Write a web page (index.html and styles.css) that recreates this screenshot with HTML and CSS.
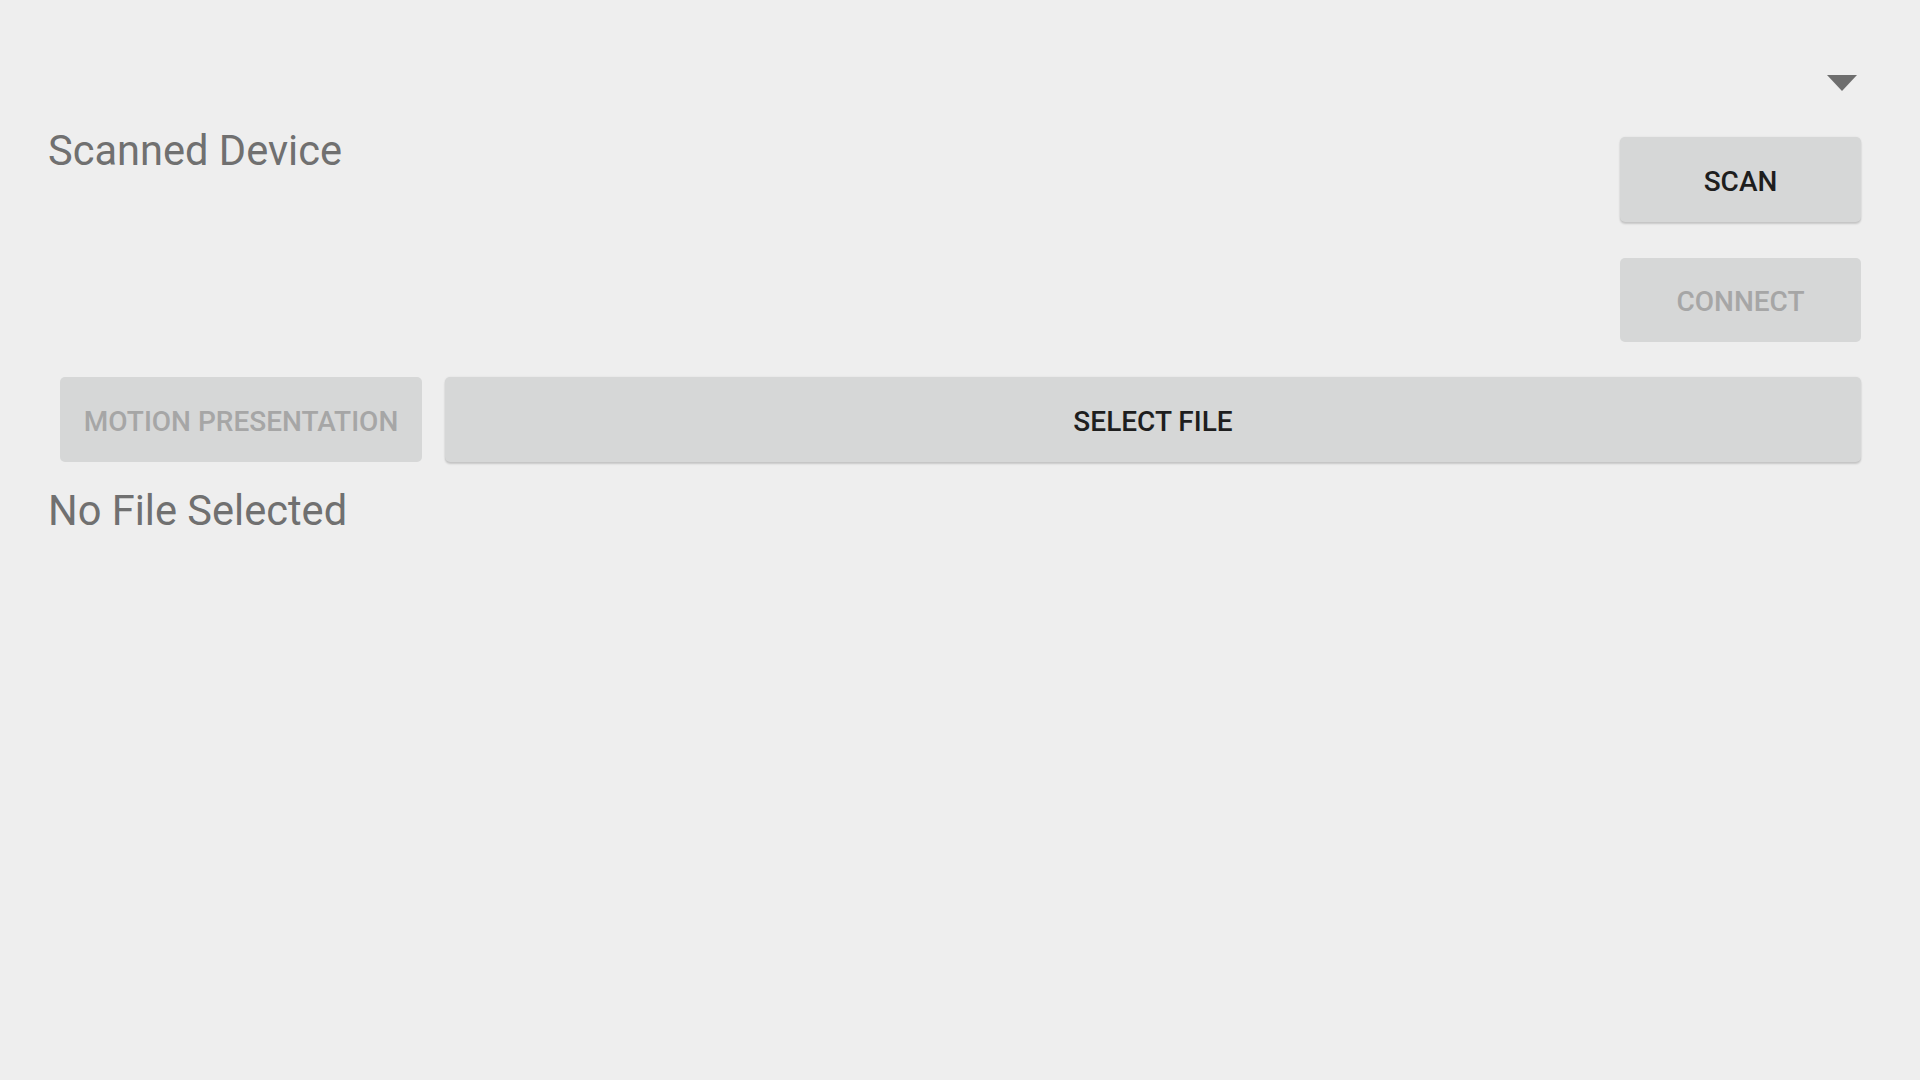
FILE: index.html
```html
<!DOCTYPE html>
<html>
<head>
<meta charset="utf-8">
<link rel="stylesheet" href="styles.css">
</head>
<body>
<div class="screen">
  <div class="spinner-row">
    <svg class="spinner-arrow" width="30" height="16" viewBox="0 0 30 16"><path d="M0 0 H30 L15 16 Z" fill="#6e6e6e"/></svg>
  </div>
  <div class="device-row">
    <div class="label">Scanned Device</div>
    <div class="device-actions">
      <div class="btn btn-scan">SCAN</div>
      <div class="btn btn-connect disabled">CONNECT</div>
    </div>
  </div>
  <div class="action-row">
    <div class="btn btn-motion disabled">MOTION PRESENTATION</div>
    <div class="btn btn-select">SELECT FILE</div>
  </div>
  <div class="label file-label">No File Selected</div>
</div>
</body>
</html>
```
FILE: styles.css
```css
html, body {
  margin: 0;
  padding: 0;
  background: #eeeeee;
}
.screen {
  width: 1920px;
  height: 1080px;
  box-sizing: border-box;
  padding: 0 59px 0 46px;
  font-family: Roboto, "Noto Sans", sans-serif;
  display: flex;
  flex-direction: column;
}
.spinner-row {
  display: flex;
  justify-content: flex-end;
  padding-top: 75px;
  padding-right: 4px;
  height: 16px;
}
.spinner-arrow {
  display: block;
}
.device-row {
  display: flex;
  justify-content: space-between;
  align-items: flex-start;
  margin-top: 32px;
}
.label {
  font-size: 41.6px;
  line-height: 50px;
  color: #707070;
  padding-left: 2px;
}
.device-row .label {
  margin-top: 3px;
}
.device-actions {
  display: flex;
  flex-direction: column;
  gap: 36px;
  margin-top: 14px;
  width: 241px;
}
.btn {
  height: 85px;
  box-sizing: border-box;
  padding-top: 3px;
  background: #d6d7d7;
  border-radius: 5px;
  display: flex;
  align-items: center;
  justify-content: center;
  font-weight: 500;
  font-size: 28px;
  color: #1e1e1e;
  box-shadow: 0 2px 2px rgba(0,0,0,0.16), 0 0 2px rgba(0,0,0,0.08);
}
.btn.disabled {
  color: #a6a6a6;
  box-shadow: none;
}
.btn-connect {
  height: 84px;
}
.action-row {
  display: flex;
  gap: 23px;
  margin-top: 35px;
  padding-left: 14px;
}
.btn-motion {
  width: 362px;
  flex: none;
}
.btn-select {
  flex: 1;
}
.file-label {
  margin-top: 24px;
}
```
